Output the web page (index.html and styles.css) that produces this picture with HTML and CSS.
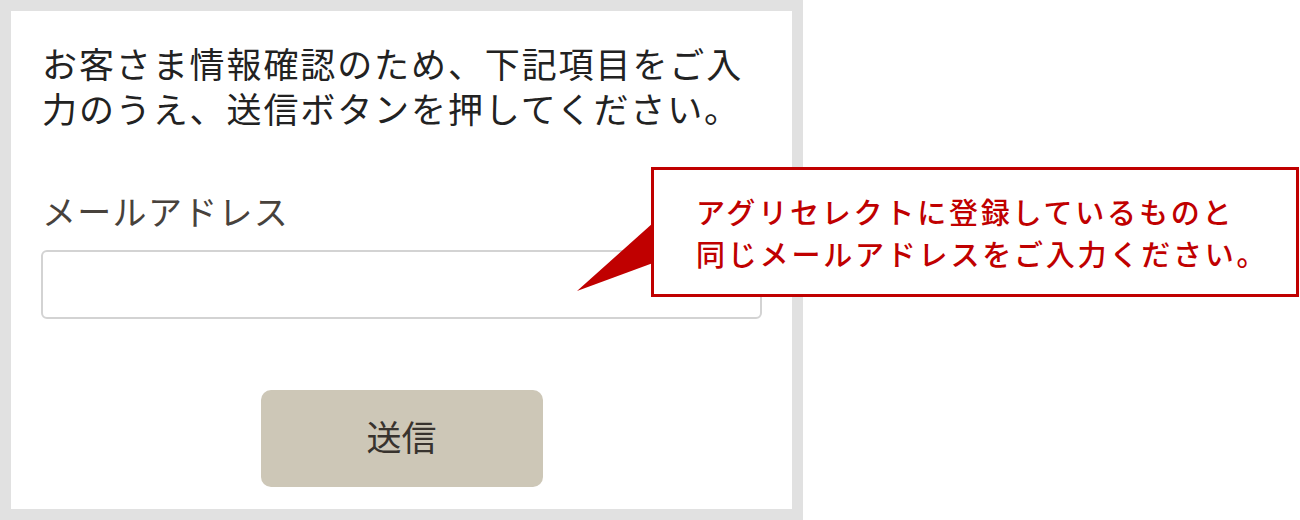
FILE: index.html
```html
<!DOCTYPE html>
<html lang="ja">
<head>
<meta charset="utf-8">
<link rel="stylesheet" href="styles.css">
</head>
<body>
<div class="stage">
  <div class="frame">
    <div class="panel">
      <p class="intro">お客さま情報確認のため、下記項目をご入<br>力のうえ、送信ボタンを押してください。</p>
      <label class="label" for="mail">メールアドレス</label>
      <input class="field" id="mail" type="text">
      <div class="actions">
        <button class="submit" type="button">送信</button>
      </div>
    </div>
  </div>
  <div class="callout">
    <svg class="pointer" width="80" height="72" viewBox="0 0 80 72"><polygon points="76,0 76,40 0,68" fill="#c00000"/></svg>
    <p class="callout-text">アグリセレクトに登録しているものと<br>同じメールアドレスをご入力ください。</p>
  </div>
</div>
</body>
</html>
```

FILE: styles.css
```css
html, body {
  margin: 0;
  padding: 0;
  background: #ffffff;
}
.stage {
  position: relative;
  width: 1300px;
  height: 520px;
  font-family: "Noto Sans CJK JP", "Noto Sans", sans-serif;
}
.frame {
  width: 803px;
  height: 520px;
  box-sizing: border-box;
  background: #e1e1e1;
  padding: 11px;
}
.panel {
  background: #ffffff;
  height: 498px;
  box-sizing: border-box;
  padding: 29px 30px 0 30px;
  display: flex;
  flex-direction: column;
}
.intro {
  margin: 0 0 0 1px;
  font-size: 35px;
  line-height: 45px;
  letter-spacing: 1.9px;
  color: #222222;
  white-space: nowrap;
}
.label {
  margin: 58px 0 0 1px;
  font-size: 34px;
  line-height: 45px;
  letter-spacing: 1.3px;
  color: #48423c;
}
.field {
  margin: 17px 0 0 0;
  height: 69px;
  box-sizing: border-box;
  border: 2px solid #d3d3d3;
  border-radius: 6px;
  background: #ffffff;
  outline: none;
}
.actions {
  display: flex;
  justify-content: center;
  margin-top: 71px;
}
.submit {
  width: 282px;
  height: 97px;
  border: none;
  border-radius: 10px;
  background: #cdc7b7;
  color: #38332e;
  font-family: "Noto Sans CJK JP", "Noto Sans", sans-serif;
  font-size: 35px;
  line-height: 40px;
  padding: 0 0 6px 0;
}
.callout {
  position: absolute;
  left: 651px;
  top: 167px;
  width: 648px;
  height: 130px;
  box-sizing: border-box;
  border: 3px solid #c00000;
  background: #ffffff;
  padding: 20px 0 0 42px;
}
.pointer {
  position: absolute;
  left: -77px;
  top: 53px;
}
.callout-text {
  margin: 0;
  font-size: 29px;
  font-weight: 500;
  line-height: 42px;
  letter-spacing: 2.8px;
  color: #c00000;
  white-space: nowrap;
}
```
